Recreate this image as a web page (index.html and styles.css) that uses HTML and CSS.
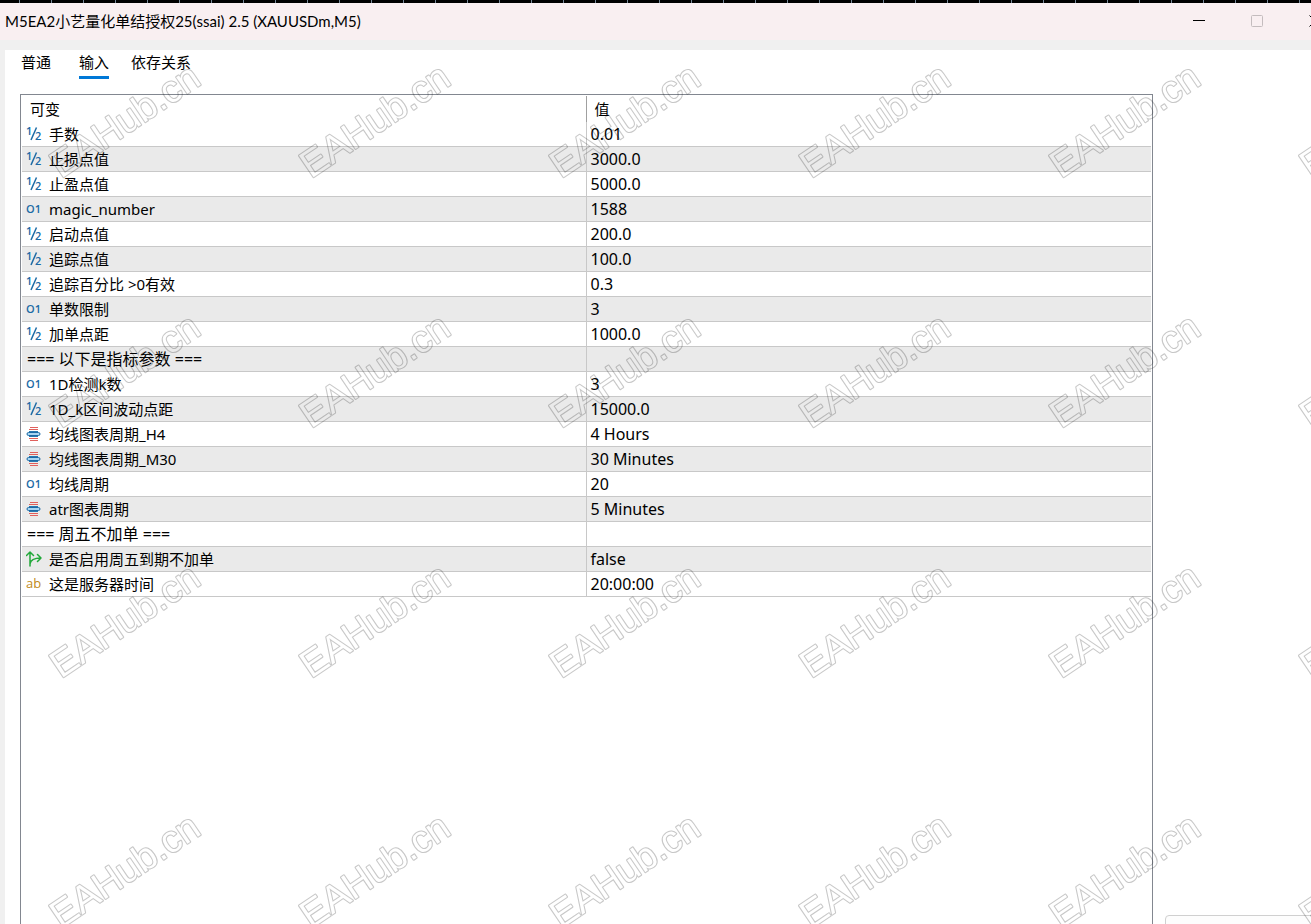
FILE: index.html
```html
<!DOCTYPE html>
<html lang="zh-CN">
<head>
    <meta charset="UTF-8">
    <meta name="viewport" content="width=device-width, initial-scale=1.0">
    <title>M5EA2小艺量化单结授权25(ssai) 2.5 (XAUUSDm,M5)</title>
    <link rel="stylesheet" href="styles.css">
</head>
<body>
    <svg class="sprite" aria-hidden="true">
        <symbol id="icon-double" viewBox="0 0 16 16">
            <text class="icon-digit" x="0" y="9">1</text>
            <path d="M10.5 1.5 5 14" fill="none" stroke="#1b6aa5" stroke-width="1.5"/>
            <text class="icon-digit" x="9" y="14">2</text>
        </symbol>
        <symbol id="icon-int" viewBox="0 0 16 16">
            <text class="icon-int-text" x="0" y="12">O1</text>
        </symbol>
        <symbol id="icon-enum" viewBox="0 0 16 16">
            <path d="M4 1.500h8M3 3.500h9M3 12.500h9M4 14.500h8" fill="none" stroke="#e0605c"/>
            <path d="M3 5.500h9M3 10.500h9" fill="none" stroke="#2a78b0"/>
            <rect x="1" y="6.5" width="13" height="3" rx="1.500" fill="#a8d4f2" stroke="#1b6aa5"/>
        </symbol>
        <symbol id="icon-bool" viewBox="0 0 16 16">
            <path d="M4 15V1M.5 4.500 4 1l3.500 3.500M4 13C4.500 9 8 7 15 7M11.500 3.500 15 7l-3.500 3.500" fill="none" stroke="#22a83a" stroke-width="1.500" stroke-linecap="round" stroke-linejoin="round"/>
        </symbol>
        <symbol id="icon-string" viewBox="0 0 16 16">
            <text class="icon-string-text" x="0" y="12">ab</text>
        </symbol>
    </svg>

    <div class="chart-strip"></div>
    <header class="titlebar">
        <h1>M5EA2小艺量化单结授权25(ssai) 2.5 (XAUUSDm,M5)</h1>
        <div class="window-buttons">
            <button type="button" aria-label="最小化"><svg width="12" height="12" viewBox="0 0 12 12"><path d="M0 5.500h12" stroke="#000"/></svg></button>
            <button type="button" aria-label="最大化" disabled><svg width="12" height="12" viewBox="0 0 12 12"><rect x=".5" y=".5" width="11" height="11" rx="1" fill="none" stroke="#c4bcbe"/></svg></button>
            <button type="button" aria-label="关闭"><svg width="12" height="12" viewBox="0 0 12 12"><path d="M.5.500l11 11M11.500.500l-11 11" stroke="#000"/></svg></button>
        </div>
    </header>

    <div class="dialog">
        <nav class="tabs">
            <a href="#">普通</a>
            <a href="#" class="active">输入</a>
            <a href="#">依存关系</a>
        </nav>
        <main class="content">
            <div class="grid-panel">
                <table class="inputs">
                    <thead>
                        <tr><th>可变</th><th>值</th></tr>
                    </thead>
                    <tbody>
                        <tr><td><svg class="icon"><use href="#icon-double"/></svg>手数</td><td>0.01</td></tr>
                        <tr><td><svg class="icon"><use href="#icon-double"/></svg>止损点值</td><td>3000.0</td></tr>
                        <tr><td><svg class="icon"><use href="#icon-double"/></svg>止盈点值</td><td>5000.0</td></tr>
                        <tr><td><svg class="icon"><use href="#icon-int"/></svg>magic_number</td><td>1588</td></tr>
                        <tr><td><svg class="icon"><use href="#icon-double"/></svg>启动点值</td><td>200.0</td></tr>
                        <tr><td><svg class="icon"><use href="#icon-double"/></svg>追踪点值</td><td>100.0</td></tr>
                        <tr><td><svg class="icon"><use href="#icon-double"/></svg>追踪百分比 &gt;0有效</td><td>0.3</td></tr>
                        <tr><td><svg class="icon"><use href="#icon-int"/></svg>单数限制</td><td>3</td></tr>
                        <tr><td><svg class="icon"><use href="#icon-double"/></svg>加单点距</td><td>1000.0</td></tr>
                        <tr><td class="group">=== 以下是指标参数 ===</td><td></td></tr>
                        <tr><td><svg class="icon"><use href="#icon-int"/></svg>1D检测k数</td><td>3</td></tr>
                        <tr><td><svg class="icon"><use href="#icon-double"/></svg>1D_k区间波动点距</td><td>15000.0</td></tr>
                        <tr><td><svg class="icon"><use href="#icon-enum"/></svg>均线图表周期_H4</td><td>4 Hours</td></tr>
                        <tr><td><svg class="icon"><use href="#icon-enum"/></svg>均线图表周期_M30</td><td>30 Minutes</td></tr>
                        <tr><td><svg class="icon"><use href="#icon-int"/></svg>均线周期</td><td>20</td></tr>
                        <tr><td><svg class="icon"><use href="#icon-enum"/></svg>atr图表周期</td><td>5 Minutes</td></tr>
                        <tr><td class="group">=== 周五不加单 ===</td><td></td></tr>
                        <tr><td><svg class="icon"><use href="#icon-bool"/></svg>是否启用周五到期不加单</td><td>false</td></tr>
                        <tr><td><svg class="icon"><use href="#icon-string"/></svg>这是服务器时间</td><td>20:00:00</td></tr>
                    </tbody>
                </table>
            </div>
            <aside class="side">
                <button type="button" class="side-button" aria-label="加载"></button>
            </aside>
        </main>
    </div>

    <svg class="watermark" aria-hidden="true">
        <defs>
            <mask id="mark-outline" maskUnits="userSpaceOnUse" x="0" y="0" width="250" height="250">
                <text class="mark mark-outer" transform="translate(61 179) rotate(-34)">EAHub.cn</text>
                <text class="mark mark-inner" transform="translate(61 179) rotate(-34)">EAHub.cn</text>
            </mask>
            <pattern id="mark-tile" width="250" height="250" patternUnits="userSpaceOnUse">
                <rect class="mark-ink" width="250" height="250" mask="url(#mark-outline)"/>
            </pattern>
        </defs>
        <rect width="100%" height="100%" fill="url(#mark-tile)"/>
    </svg>
</body>
</html>
```
FILE: styles.css
```css
* {
    box-sizing: border-box;
}
body {
    margin: 0;
    height: 100vh;
    display: flex;
    flex-direction: column;
    position: relative;
    overflow: hidden;
    background-color: #f0f0f0;
    color: #000;
    font-family: "Noto Sans", "Noto Sans CJK SC", sans-serif;
    font-size: 15px;
}
.sprite {
    display: none;
}

/* window frame */
.chart-strip {
    height: 3px;
    flex-shrink: 0;
    background: repeating-linear-gradient(to right, #000 0 19px, #778899 19px 20px, #000 20px 32px);
}
.titlebar {
    height: 37px;
    flex-shrink: 0;
    display: flex;
    justify-content: space-between;
    background-color: #f9eff1;
    overflow: hidden;
}
.titlebar h1 {
    margin: 0;
    padding-left: 5px;
    font-family: Lato, "Noto Sans CJK SC", sans-serif;
    font-size: 15px;
    font-weight: normal;
    line-height: 36px;
    white-space: nowrap;
}
.window-buttons {
    display: flex;
    margin-right: -33px;
}
.window-buttons button {
    width: 58px;
    height: 36px;
    padding: 0;
    border: none;
    background: none;
    display: flex;
    align-items: center;
    justify-content: center;
}
.dialog {
    flex: 1;
    min-height: 0;
    display: flex;
    flex-direction: column;
    margin: 10px 0 0 5px;
    background-color: #fff;
}

/* tabs */
.tabs {
    display: flex;
    padding-left: 16px;
    height: 44px;
    align-items: flex-start;
}
.tabs a {
    color: #000;
    text-decoration: none;
    line-height: 24px;
    height: 29px;
    margin-right: 22px;
}
.tabs a:first-child {
    margin-right: 28px;
}
.tabs a.active {
    border-bottom: 3px solid #0078d7;
}

/* parameters */
.content {
    flex: 1;
    min-height: 0;
    display: flex;
    gap: 12px;
    padding-left: 15px;
}
.grid-panel {
    flex: 1;
    border: 1px solid #828790;
    border-bottom: none;
    padding: 1px 1px 0;
}
.inputs {
    width: 100%;
    table-layout: fixed;
    border-collapse: separate;
    border-spacing: 0;
}
.inputs th {
    height: 26px;
    padding: 0 8px;
    font-weight: normal;
    text-align: left;
    line-height: 26px;
}
.inputs th:first-child {
    width: calc(50% - 1px);
    border-right: 1px solid #a0a0a0;
}
.inputs td {
    height: 25px;
    padding: 0 4px;
    line-height: 24px;
    border-bottom: 1px solid #c8c8c8;
    white-space: nowrap;
}
.inputs td:first-child {
    border-right: 1px solid #c8c8c8;
}
.inputs td:last-child, .inputs .group {
    font-size: 16px;
}
.inputs .group {
    padding-left: 5px;
}
.inputs tbody tr:nth-child(even) {
    background-color: #eaeaea;
}
.icon {
    width: 16px;
    height: 16px;
    margin-right: 7px;
    vertical-align: -2px;
}
.icon-digit {
    font: 600 11px "Open Sans", sans-serif;
    fill: #1b6aa5;
}
.icon-int-text {
    font: 600 11px "Open Sans", sans-serif;
    fill: #1b6aa5;
}
.icon-string-text {
    font: 13px "Open Sans", sans-serif;
    fill: #c08a20;
}
.side {
    width: 146px;
    flex-shrink: 0;
    display: flex;
    align-items: flex-end;
}
.side-button {
    width: 160px;
    height: 32px;
    flex-shrink: 0;
    margin-bottom: -23px;
    border: 1px solid #d0d0d0;
    border-radius: 4px;
    background-color: #fdfdfd;
}

/* tiled outline text over the whole window */
.watermark {
    position: absolute;
    inset: 0;
    width: 100%;
    height: 100%;
    pointer-events: none;
}
.mark {
    font: 38px "Liberation Sans", Arial, sans-serif;
    stroke-linejoin: round;
}
.mark-outer {
    fill: #fff;
    stroke: #fff;
    stroke-width: 2px;
}
.mark-inner {
    fill: #000;
}
.mark-ink {
    fill: #000;
    fill-opacity: 0.22;
}
```
